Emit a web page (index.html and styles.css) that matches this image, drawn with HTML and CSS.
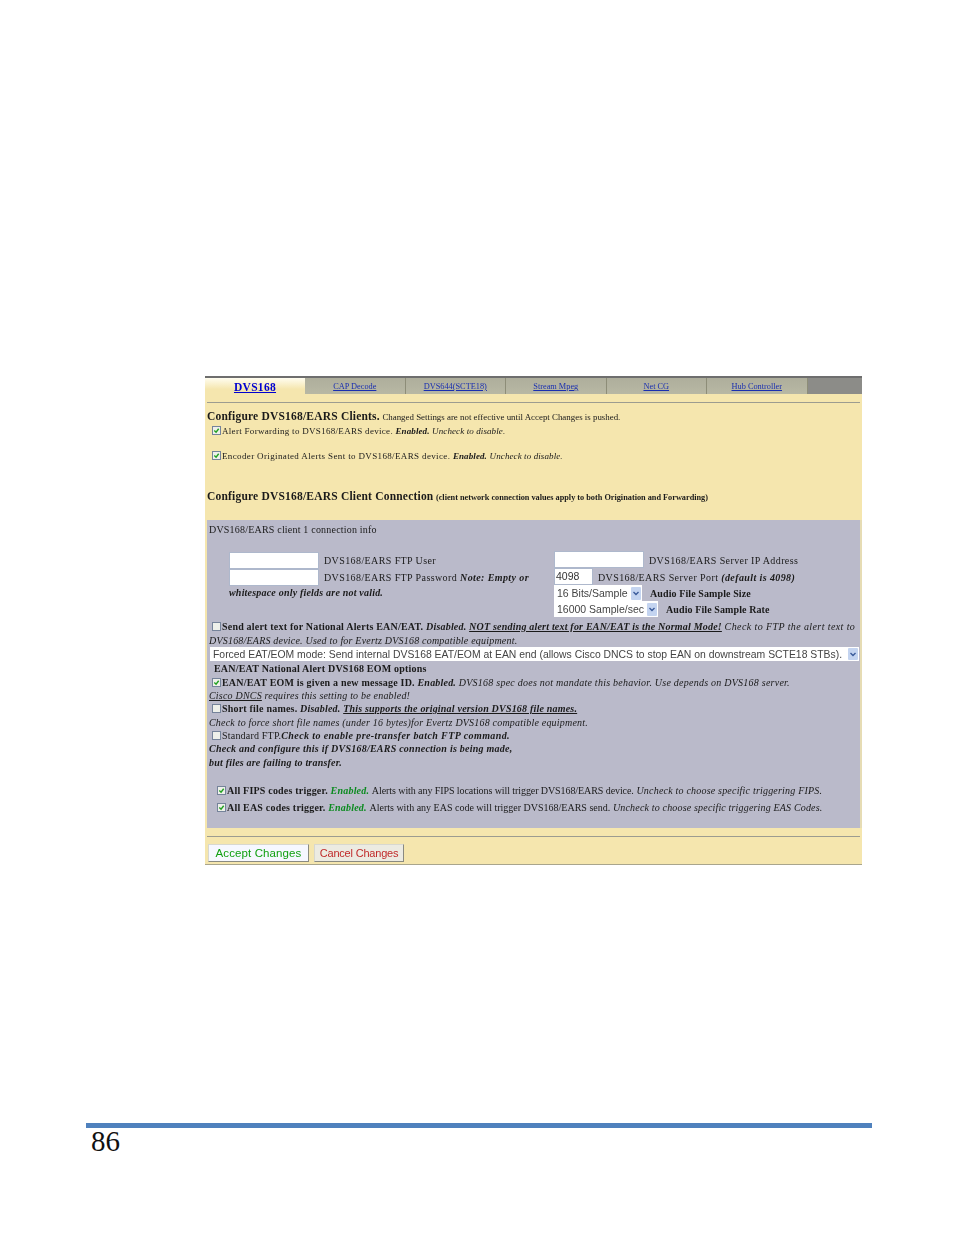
FILE: index.html
```html
<!DOCTYPE html>
<html lang="en">
<head>
<meta charset="utf-8">
<title>DVS168 configuration</title>
<link rel="stylesheet" href="styles.css">
</head>
<body>
<main class="page">
  <section class="panel">
    <nav class="tabs">
      <a class="tab tab-active" href="#">DVS168</a>
      <a class="tab" href="#">CAP Decode</a>
      <a class="tab" href="#">DVS644(SCTE18)</a>
      <a class="tab" href="#">Stream Mpeg</a>
      <a class="tab" href="#">Net CG</a>
      <a class="tab" href="#">Hub Controller</a>
      <span class="tab-fill"></span>
    </nav>
    <hr class="rule rule-top">
    <div class="heading h-first"><b class="big">Configure DVS168/EARS Clients.</b> <span class="tiny">Changed Settings are not effective until Accept Changes is pushed.</span></div>
    <div class="row check-row indent-a small"><span class="cb on"><svg viewBox="0 0 8 8"><path d="M1.500 4l2 2 3-4"/></svg></span>Alert Forwarding to DVS168/EARS device. <b><i>Enabled.</i></b> <i>Uncheck to disable.</i></div>
    <div class="row check-row indent-a small r-gap roomy"><span class="cb on"><svg viewBox="0 0 8 8"><path d="M1.500 4l2 2 3-4"/></svg></span>Encoder Originated Alerts Sent to DVS168/EARS device. <b><i>Enabled.</i></b> <i>Uncheck to disable.</i></div>
    <div class="heading h-second"><b class="big">Configure DVS168/EARS Client Connection</b> <b class="tiny tiny-b">(client network connection values apply to both Origination and Forwarding)</b></div>

    <div class="client">
      <div class="row client-title">DVS168/EARS client 1 connection info</div>
      <div class="columns">
        <div class="col-left">
          <div class="field"><span class="input wide"></span><span class="label">DVS168/EARS FTP User</span></div>
          <div class="field"><span class="input wide"></span><span class="label">DVS168/EARS FTP Password <i><b>Note: Empty or</b></i></span></div>
          <div class="note"><b><i>whitespace only fields are not valid.</i></b></div>
        </div>
        <div class="col-right">
          <div class="field"><span class="input wide"></span><span class="label">DVS168/EARS Server IP Address</span></div>
          <div class="field"><span class="input port">4098</span><span class="label">DVS168/EARS Server Port <b><i>(default is 4098)</i></b></span></div>
          <div class="field"><span class="select s-size">16 Bits/Sample<span class="arrow"><svg viewBox="0 0 8 8"><path d="M1.500 3l2.500 2.500L6.500 3"/></svg></span></span><b class="lab-b">Audio File Sample Size</b></div>
          <div class="field"><span class="select s-rate">16000 Sample/sec<span class="arrow"><svg viewBox="0 0 8 8"><path d="M1.500 3l2.500 2.500L6.500 3"/></svg></span></span><b class="lab-b">Audio File Sample Rate</b></div>
        </div>
      </div>
      <div class="row check-row"><span class="cb"></span><b>Send alert text for National Alerts EAN/EAT.</b> <b><i>Disabled.</i></b> <b><i><u>NOT sending alert text for EAN/EAT is the Normal Mode!</u></i></b> <i class="wider">Check to FTP the alert text to</i></div>
      <div class="row"><i>DVS168/EARS device. Used to for Evertz DVS168 compatible equipment.</i></div>
      <div class="select s-full">Forced EAT/EOM mode: Send internal DVS168 EAT/EOM at EAN end (allows Cisco DNCS to stop EAN on downstream SCTE18 STBs).<span class="arrow"><svg viewBox="0 0 8 8"><path d="M1.500 3l2.500 2.500L6.500 3"/></svg></span></div>
      <div class="row sub-title"><b>EAN/EAT National Alert DVS168 EOM options</b></div>
      <div class="row check-row"><span class="cb on"><svg viewBox="0 0 8 8"><path d="M1.500 4l2 2 3-4"/></svg></span><b>EAN/EAT EOM is given a new message ID.</b> <b><i>Enabled.</i></b> <i class="wide-text">DVS168 spec does not mandate this behavior. Use depends on DVS168 server.</i></div>
      <div class="row short"><i><u>Cisco DNCS</u> requires this setting to be enabled!</i></div>
      <div class="row check-row short"><span class="cb"></span><b>Short file names.</b> <b><i>Disabled.</i></b> <b><i><u>This supports the original version DVS168 file names.</u></i></b></div>
      <div class="row"><i>Check to force short file names (under 16 bytes)for Evertz DVS168 compatible equipment.</i></div>
      <div class="row check-row short"><span class="cb"></span>Standard FTP.<b class="wider"><i>Check to enable pre-transfer batch FTP command.</i></b></div>
      <div class="row short"><b class="wide-text"><i>Check and configure this if DVS168/EARS connection is being made,</i></b></div>
      <div class="row"><b><i>but files are failing to transfer.</i></b></div>
      <div class="row check-row indent-b r-gap2"><span class="cb on"><svg viewBox="0 0 8 8"><path d="M1.500 4l2 2 3-4"/></svg></span><b>All FIPS codes trigger.</b> <b><i class="green">Enabled.</i></b> <span class="plain-tight">Alerts with any FIPS locations will trigger DVS168/EARS device.</span> <i>Uncheck to choose specific triggering FIPS.</i></div>
      <div class="row check-row indent-b r-gap3"><span class="cb on"><svg viewBox="0 0 8 8"><path d="M1.500 4l2 2 3-4"/></svg></span><b>All EAS codes trigger.</b> <b><i class="green">Enabled.</i></b> <span class="plain">Alerts with any EAS code will trigger DVS168/EARS send.</span> <i class="tight">Uncheck to choose specific triggering EAS Codes.</i></div>
    </div>

    <hr class="rule rule-bottom">
    <div class="actions">
      <button class="btn btn-accept" type="button">Accept Changes</button>
      <button class="btn btn-cancel" type="button">Cancel Changes</button>
    </div>
  </section>

  <footer class="footer">
    <div class="page-number">86</div>
  </footer>
</main>
</body>
</html>
```
FILE: styles.css
```css
* { box-sizing: border-box; }
html, body { margin: 0; padding: 0; background: #fff; }
body { height: 1235px; overflow: hidden; font-family: "Liberation Serif", "Times New Roman", serif; color: #1a1a1a; }
.page { padding-top: 376px; }

.panel {
  width: 657px; height: 489px; margin-left: 205px;
  background: #f5e6ae;
  border-bottom: 1px solid #a9a58c;
  font-size: 10px; letter-spacing: .2px;
  filter: blur(.35px);
}

.tabs { display: flex; height: 18px; border-top: 2px solid #6e6e6e; background: #8c8c88; }
.tab {
  width: 100.5px; border-right: 1px solid #8d8d78; text-align: center;
  background: linear-gradient(#aeae9c, #b8b8a4);
  color: #1a2fb0; font-size: 8.3px; letter-spacing: 0; line-height: 17px;
}
.tab-active {
  width: 100px; border-right: 0; color: #0000d0;
  background: linear-gradient(#fffdf0, #f5e6ae 70%);
  font-size: 11.5px; font-weight: bold; letter-spacing: .3px; line-height: 18px;
}
.tab-fill { flex: 1; }

.rule { height: 1px; margin: 0 2px; border: 0; background: #9c9c90; }
.rule-top { margin-top: 8px; }
.rule-bottom { margin-top: 8px; }

.heading { height: 14px; line-height: 14px; padding-left: 2px; white-space: nowrap; letter-spacing: 0; }
.h-first { margin-top: 6px; }
.h-second { margin-top: 26px; }
.big { font-size: 11.5px; letter-spacing: .2px; }
.tiny { font-size: 8.9px; }
.tiny-b { font-size: 8.25px; }

.row { height: 14px; line-height: 14px; padding-left: 2px; white-space: nowrap; display: block; }
.client .row { padding-top: 1px; }
.client .short { height: 13px; line-height: 13px; padding-top: 0; }
.check-row { padding-left: 5px; }
.small { font-size: 9px; letter-spacing: .3px; }
.small i { letter-spacing: .1px; }
.roomy { letter-spacing: .36px; }
.indent-a { padding-left: 7px; margin-top: 1px; }
.client .check-row { padding-left: 5px; }
.client .indent-b { padding-left: 10px; }
.r-gap { margin-top: 11px; }
.r-gap2 { margin-top: 14px; }
.r-gap3 { margin-top: 3px; }
.client .sub-title { padding-left: 7px; }
.green { color: #0a8a1e; }
.plain { letter-spacing: 0; }
.plain-tight { letter-spacing: -.08px; }
.wider { letter-spacing: .4px; }
.wide-text { letter-spacing: .24px; }
.tight { letter-spacing: .17px; }

.cb {
  display: inline-block; width: 9px; height: 9px; margin-right: 1px; vertical-align: -1px;
  background: #eef0ea; border: 1px solid #75839a;
}
.cb.on svg { display: block; width: 7px; height: 7px; fill: none; stroke: #21a121; stroke-width: 1.6; }

.client {
  width: 655px; height: 308px; margin-top: 17px; margin-left: 2px;
  background: #babaca;
  border-right: 2px solid #e6dcb4;
}
.client .client-title { padding-top: 3px; height: 16px; }

.columns { display: flex; height: 68px; margin-top: 15px; }
.col-left { width: 347px; padding-left: 22px; padding-top: 1px; }
.field { display: flex; align-items: center; height: 17px; white-space: nowrap; letter-spacing: .4px; }
.col-right .field + .field + .field { height: 16px; letter-spacing: .1px; }
.col-right .label { padding-top: 1px; }
.input { display: block; height: 17px; background: #fff; border: 1px solid #aeb8cc; font: 10.5px "Liberation Sans", Arial, sans-serif; letter-spacing: 0; line-height: 15px; padding-left: 1px; color: #333; }
.wide { width: 90px; }
.port { width: 39px; }
.label { margin-left: 5px; }
.lab-b { margin-left: 8px; }
.note { line-height: 14px; }

.select {
  display: flex; align-items: center; justify-content: space-between; height: 16px;
  background: #fff; color: #444; padding: 0 1px 0 3px;
  font: 10.5px "Liberation Sans", Arial, sans-serif; letter-spacing: 0; white-space: nowrap;
}
.s-size { width: 88px; }
.s-rate { width: 104px; }
.s-full { width: 649px; margin: 0 0 0 3px; height: 14px; padding-left: 3px; font-size: 10.4px; }
.arrow { display: block; flex: none; width: 10px; height: 13px; background: #c4d4f0; border-radius: 1px; }
.s-full .arrow { height: 12px; }
.arrow svg { display: block; width: 8px; height: 8px; margin: 2px 1px; fill: none; stroke: #3a5a9a; stroke-width: 1.4; }

.actions { display: flex; gap: 5px; padding: 7px 0 0 3px; }
.btn {
  height: 18px; padding: 0; font: 11.5px "Liberation Sans", Arial, sans-serif;
  border: 1px solid #d8d8d0; border-right-color: #8a8a80; border-bottom-color: #8a8a80;
}
.btn-accept { width: 101px; background: #f6f8ff; color: #12a012; letter-spacing: .1px; }
.btn-cancel { width: 90px; background: #ecebe2; color: #c02a2a; font-size: 11px; letter-spacing: -.2px; }

.footer { width: 786px; margin: 258px 0 0 86px; border-top: 5px solid #4f81bd; }
.page-number { padding-left: 5px; font-size: 29px; line-height: 26px; color: #111; }
```
